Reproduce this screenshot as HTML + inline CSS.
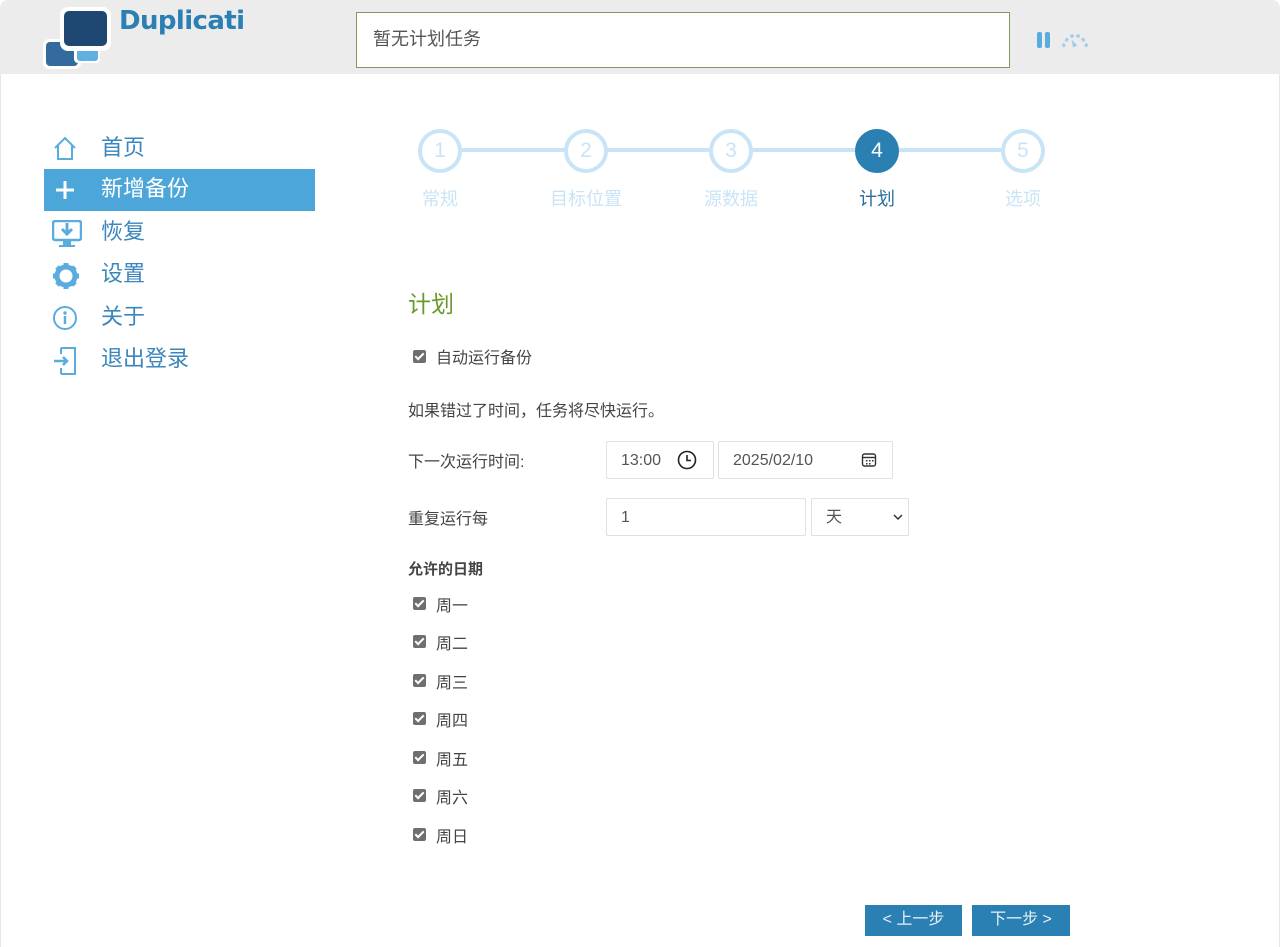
<!DOCTYPE html>
<html><head><meta charset="utf-8"><style>
*{box-sizing:border-box;margin:0;padding:0}
body{width:1280px;height:947px;background:#fff;font-family:"Liberation Sans","Noto Sans CJK SC",sans-serif;position:relative;overflow:hidden;color:#444}
.a{position:absolute}
.hdr{left:0;top:0;width:1280px;height:74px;background:#ececec;border-radius:8px 8px 0 0}
.side{border-left:1px solid #e6e6e6;border-right:1px solid #e6e6e6;left:0;top:74px;width:1280px;height:873px}
.nav{left:44px;width:271px;height:42px;font-size:22px;color:#3a86bd;line-height:40px}
.nav span{position:absolute;left:57px}
.nav svg{position:absolute;left:8px;top:8px}
.circ{width:44px;height:44px;border-radius:50%;border:4px solid #c9e4f6;background:#fff;text-align:center;line-height:36px;font-size:21px;color:#c9e4f6;top:129px}
.lbl{top:185px;font-size:18px;color:#c9e4f6;text-align:center;width:100px}
.cb{width:13px;height:13px;background:#6f6f6f;border-radius:2px}
.cb::after{content:"";position:absolute;left:4px;top:1px;width:3px;height:7px;border:solid #fff;border-width:0 2px 2px 0;transform:rotate(45deg)}
.t16{font-size:16px;color:#444}
.inp{border:1px solid #e0e0e0;border-radius:2px;height:38px;font-size:16px;color:#555;line-height:38px;padding-left:14px}
.btn{top:905px;height:31px;background:#2a7fb3;color:#e8f1f7;font-size:16px;line-height:29px;text-align:center}
</style></head><body>
<div class="a hdr"></div>
<div class="a side"></div>
<!-- logo -->
<svg class="a" style="left:0;top:0" width="120" height="74" viewBox="0 0 120 74">
<rect x="43" y="39" width="38" height="30" rx="6" fill="#fff"/>
<rect x="46" y="42" width="32" height="24" rx="4" fill="#336b9e"/>
<rect x="74" y="40" width="26" height="23" rx="4" fill="#fff"/>
<rect x="77" y="42" width="21" height="19" rx="3" fill="#62b0df"/>
<rect x="60" y="7" width="51" height="44" rx="8" fill="#fff"/>
<rect x="64" y="11" width="43" height="35" rx="5" fill="#1e4872"/>
</svg>
<div class="a" style="left:119px;top:6px;font-size:26px;font-weight:bold;color:#2a7fb3;font-family:'DejaVu Sans',sans-serif;letter-spacing:-0.6px">Duplicati</div>
<div class="a" style="left:356px;top:12px;width:654px;height:56px;border:1px solid #7f9a5a;background:#fff;font-size:18px;color:#555;line-height:52px;padding-left:16px">暂无计划任务</div>
<div class="a" style="left:1037px;top:32px;width:5px;height:16px;background:#5aacdf;border-radius:2px"></div>
<div class="a" style="left:1045px;top:32px;width:5px;height:16px;background:#5aacdf;border-radius:2px"></div>
<svg class="a" style="left:1060px;top:30px" width="30" height="18" viewBox="0 0 30 18">
<g stroke="#9fcdee" stroke-width="3.5" fill="none"><path d="M2.5 16 L5 14.5"/><path d="M5.5 9 L8 10.5"/><path d="M11.5 4.5 L12.5 7.5"/><path d="M18.5 4.5 L17.5 7.5"/><path d="M24.5 9 L22 10.5"/><path d="M27.5 16 L25 14.5"/></g>
<path d="M11.5 9.5 L17.5 15.5 L13 17.5 Z" fill="#9fcdee"/>
</svg>
<!-- nav -->
<div class="a nav" style="top:128px"><svg width="26" height="26" viewBox="0 0 26 26"><path d="M3 12 L13 2 L23 12 M6 9 V23 H20 V9" fill="none" stroke="#5aacdf" stroke-width="2"/></svg><span>首页</span></div>
<div class="a nav" style="top:169px;background:#4da6d9;color:#fff"><svg width="26" height="26" viewBox="0 0 26 26"><path d="M13 4V22M4 13H22" stroke="#fff" stroke-width="3"/></svg><span>新增备份</span></div>
<div class="a nav" style="top:212px"><svg width="30" height="28" viewBox="0 0 30 28"><rect x="1" y="1" width="28" height="19" rx="2" fill="none" stroke="#5aacdf" stroke-width="2.5"/><path d="M15 3V13M10 9L15 14L20 9" stroke="#5aacdf" stroke-width="3" fill="none"/><path d="M11 21H19V25H23V27H7V25H11Z" fill="#5aacdf"/></svg><span>恢复</span></div>
<div class="a nav" style="top:254px"><svg width="28" height="28" viewBox="0 0 28 28"><circle cx="14" cy="14" r="9" fill="none" stroke="#5aacdf" stroke-width="5"/><g stroke="#5aacdf" stroke-width="5"><path d="M14 1V6M14 22V27M1 14H6M22 14H27M5 5L8 8M20 20L23 23M23 5L20 8M5 23L8 20"/></g><circle cx="14" cy="14" r="4" fill="#fff"/></svg><span>设置</span></div>
<div class="a nav" style="top:297px"><svg width="26" height="26" viewBox="0 0 26 26"><circle cx="13" cy="13" r="11" fill="none" stroke="#5aacdf" stroke-width="2"/><circle cx="13" cy="8" r="1.7" fill="#5aacdf"/><path d="M13 11V19" stroke="#5aacdf" stroke-width="2.5"/></svg><span>关于</span></div>
<div class="a nav" style="top:339px"><svg width="26" height="28" viewBox="0 0 26 28"><path d="M9 1H23V27H9M9 1V7M9 21V27" fill="none" stroke="#5aacdf" stroke-width="2"/><path d="M2 14H15M11 10L15 14L11 18" fill="none" stroke="#5aacdf" stroke-width="2.5"/></svg><span>退出登录</span></div>
<!-- steps -->
<div class="a" style="left:440px;top:148px;width:585px;height:4px;background:#c9e4f6"></div>
<div class="a circ" style="left:418px">1</div>
<div class="a circ" style="left:564px">2</div>
<div class="a circ" style="left:709px">3</div>
<div class="a circ" style="left:855px;background:#2a7fb3;border-color:#2a7fb3;color:#fff">4</div>
<div class="a circ" style="left:1001px">5</div>
<div class="a lbl" style="left:390px">常规</div>
<div class="a lbl" style="left:536px">目标位置</div>
<div class="a lbl" style="left:681px">源数据</div>
<div class="a lbl" style="left:827px;color:#2a6d9c">计划</div>
<div class="a lbl" style="left:973px">选项</div>
<!-- form -->
<div class="a" style="left:408px;top:285px;font-size:23px;color:#6a9a2a">计划</div>
<div class="a cb" style="left:413px;top:350px"></div>
<div class="a t16" style="left:436px;top:344px">自动运行备份</div>
<div class="a t16" style="left:408px;top:397px">如果错过了时间，任务将尽快运行。</div>
<div class="a t16" style="left:408px;top:448px">下一次运行时间:</div>
<div class="a inp" style="left:606px;top:441px;width:108px">13:00</div>
<svg class="a" style="left:677px;top:450px" width="20" height="20" viewBox="0 0 20 20"><circle cx="10" cy="10" r="8.5" fill="none" stroke="#222" stroke-width="1.6"/><path d="M10 5V10.5H14" fill="none" stroke="#222" stroke-width="1.6"/></svg>
<div class="a inp" style="left:718px;top:441px;width:175px">2025/02/10</div>
<svg class="a" style="left:861px;top:452px" width="16" height="16" viewBox="0 0 16 16"><rect x="1.5" y="2" width="13" height="12" rx="2" fill="none" stroke="#333" stroke-width="1.4"/><path d="M1.5 5.5H14.5" stroke="#333" stroke-width="1.4"/><g fill="#333"><rect x="5" y="8" width="1.5" height="1.5"/><rect x="8" y="8" width="1.5" height="1.5"/><rect x="11" y="8" width="1.5" height="1.5"/><rect x="5" y="11" width="1.5" height="1.5"/><rect x="8" y="11" width="1.5" height="1.5"/></g></svg>
<div class="a t16" style="left:408px;top:505px">重复运行每</div>
<div class="a inp" style="left:606px;top:498px;width:200px">1</div>
<div class="a inp" style="left:811px;top:498px;width:98px">天</div>
<svg class="a" style="left:893px;top:513px" width="10" height="8" viewBox="0 0 10 8"><path d="M1 2L5 6L9 2" fill="none" stroke="#333" stroke-width="1.5"/></svg>
<div class="a t16" style="left:408px;top:558px;font-weight:bold;font-size:15px">允许的日期</div>
<div class="a cb" style="left:413px;top:597px"></div><div class="a t16" style="left:436px;top:592px">周一</div>
<div class="a cb" style="left:413px;top:635px"></div><div class="a t16" style="left:436px;top:630px">周二</div>
<div class="a cb" style="left:413px;top:674px"></div><div class="a t16" style="left:436px;top:669px">周三</div>
<div class="a cb" style="left:413px;top:712px"></div><div class="a t16" style="left:436px;top:707px">周四</div>
<div class="a cb" style="left:413px;top:751px"></div><div class="a t16" style="left:436px;top:746px">周五</div>
<div class="a cb" style="left:413px;top:789px"></div><div class="a t16" style="left:436px;top:784px">周六</div>
<div class="a cb" style="left:413px;top:828px"></div><div class="a t16" style="left:436px;top:823px">周日</div>
<div class="a btn" style="left:865px;width:97px">&lt; 上一步</div>
<div class="a btn" style="left:972px;width:98px">下一步 &gt;</div>
</body></html>
